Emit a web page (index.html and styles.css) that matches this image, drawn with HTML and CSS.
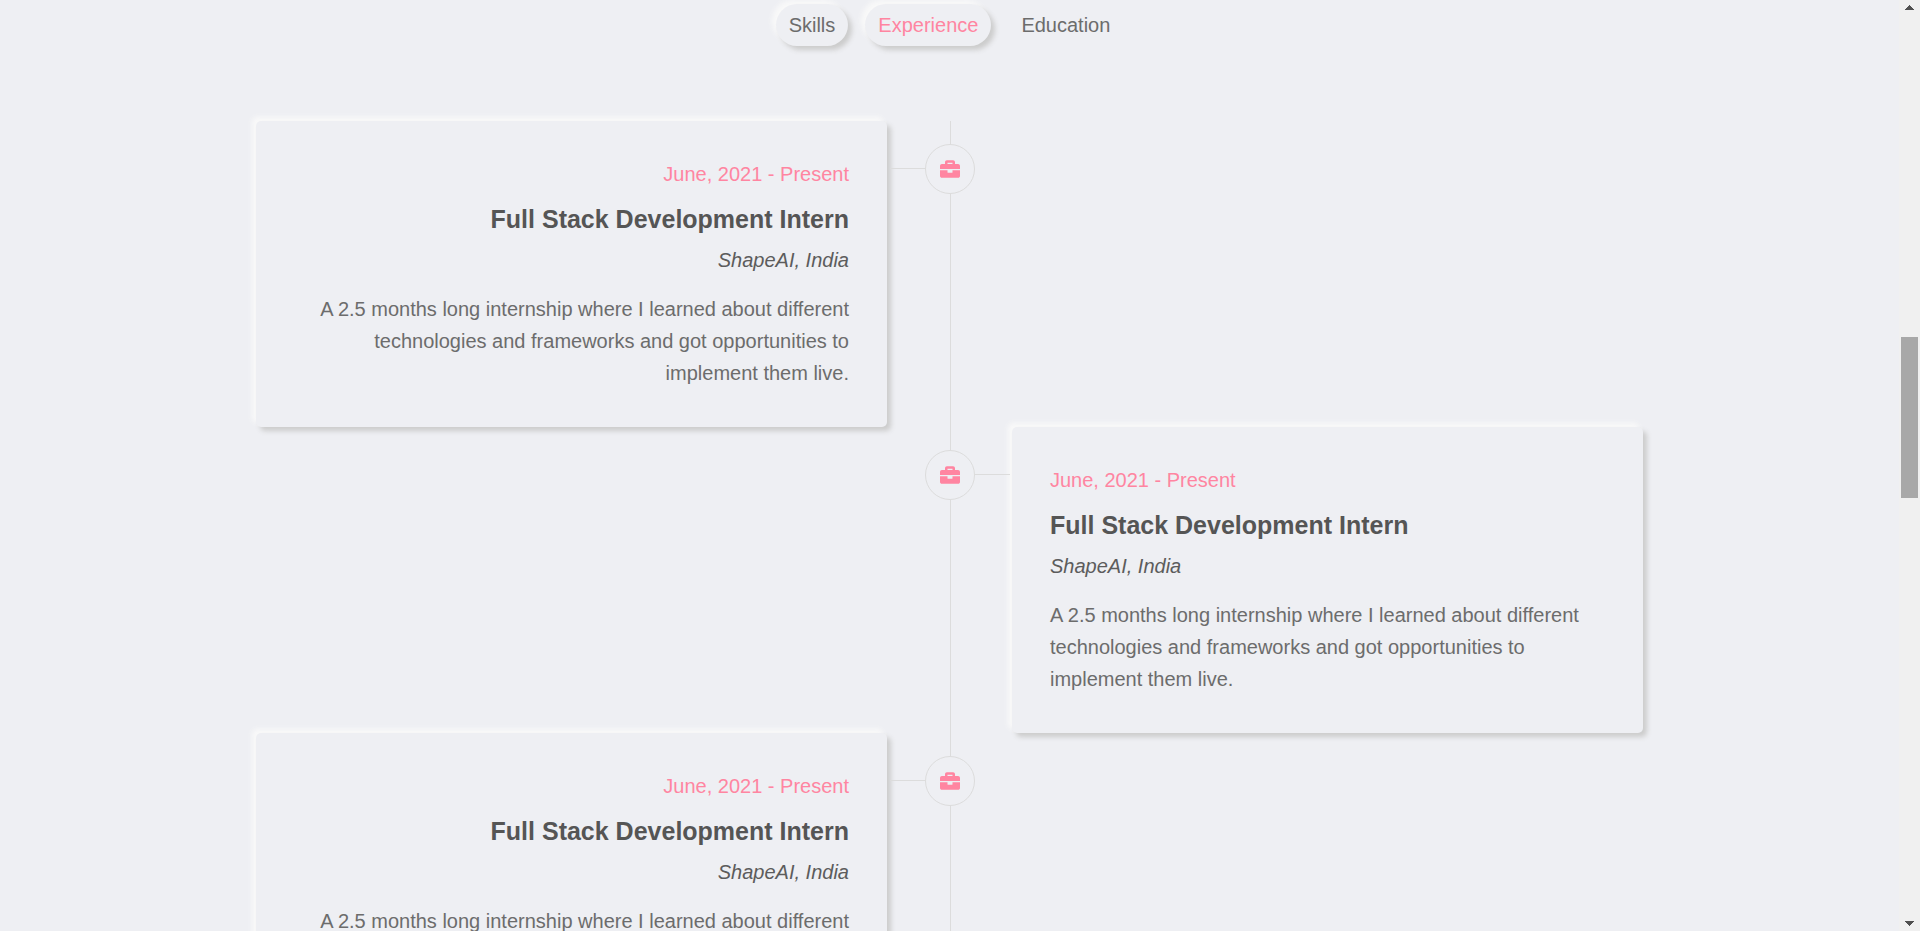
FILE: index.html
```html
<!DOCTYPE html>
<html lang="en">
<head>
<meta charset="utf-8">
<meta name="viewport" content="width=device-width, initial-scale=1">
<title>Experience</title>
<link rel="stylesheet" href="styles.css">
</head>
<body>
<svg class="sprite" aria-hidden="true">
  <symbol id="briefcase" viewBox="0 0 512 512">
    <path d="M320 336c0 8.840-7.160 16-16 16h-96c-8.840 0-16-7.160-16-16v-48H0v144c0 25.600 22.400 48 48 48h416c25.600 0 48-22.400 48-48V288H320v48zm144-208h-80V80c0-25.600-22.400-48-48-48H176c-25.600 0-48 22.400-48 48v48H48c-25.600 0-48 22.400-48 48v80h512v-80c0-25.600-22.400-48-48-48zm-144 0H192V96h128v32z"/>
  </symbol>
</svg>
<div class="viewport">
  <main class="page">
    <nav class="tabs" aria-label="Resume sections">
      <button class="tab tab-raised" type="button">Skills</button>
      <button class="tab tab-raised tab-active" type="button">Experience</button>
      <button class="tab" type="button">Education</button>
    </nav>
    <section class="timeline">
      <div class="item item-left">
        <article class="card">
          <p class="date">June, 2021 - Present</p>
          <h2 class="role">Full Stack Development Intern</h2>
          <p class="company">ShapeAI, India</p>
          <p class="summary">A 2.5 months long internship where I learned about different technologies and frameworks and got opportunities to implement them live.</p>
        </article>
        <div class="marker"><svg class="icon" aria-hidden="true"><use href="#briefcase"/></svg></div>
      </div>
      <div class="item item-right">
        <article class="card">
          <p class="date">June, 2021 - Present</p>
          <h2 class="role">Full Stack Development Intern</h2>
          <p class="company">ShapeAI, India</p>
          <p class="summary">A 2.5 months long internship where I learned about different technologies and frameworks and got opportunities to implement them live.</p>
        </article>
        <div class="marker"><svg class="icon" aria-hidden="true"><use href="#briefcase"/></svg></div>
      </div>
      <div class="item item-left">
        <article class="card">
          <p class="date">June, 2021 - Present</p>
          <h2 class="role">Full Stack Development Intern</h2>
          <p class="company">ShapeAI, India</p>
          <p class="summary">A 2.5 months long internship where I learned about different technologies and frameworks and got opportunities to implement them live.</p>
        </article>
        <div class="marker"><svg class="icon" aria-hidden="true"><use href="#briefcase"/></svg></div>
      </div>
    </section>
  </main>
  <div class="scrollbar" aria-hidden="true">
    <svg class="arrow" viewBox="0 0 9 5"><path d="M4 0h1v1h1v1h1v1h1v1h1v1H0V4h1V3h1V2h1V1h1z"/></svg>
    <div class="track"><div class="thumb"></div></div>
    <svg class="arrow arrow-down" viewBox="0 0 9 5"><path d="M4 0h1v1h1v1h1v1h1v1h1v1H0V4h1V3h1V2h1V1h1z"/></svg>
  </div>
</div>
</body>
</html>
```

FILE: styles.css
```css
* {
  box-sizing: border-box;
}

body {
  margin: 0;
  background: #eeeff3;
  color: #6c6c6c;
  font-family: "Liberation Sans", Arial, sans-serif;
  font-size: 20px;
  line-height: 32px;
}

.sprite {
  display: none;
}

.viewport {
  display: flex;
  height: 100vh;
  overflow: hidden;
}

.page {
  flex: 1;
  padding-top: 4px;
}

.tabs {
  display: flex;
  justify-content: center;
  gap: 17px;
  margin-bottom: 75px;
}

.tab {
  padding: 5px 13px;
  border: 0;
  border-radius: 21px;
  background: transparent;
  color: inherit;
  font: inherit;
}

.tab-raised {
  box-shadow: 4px 4px 5px #cccccc, -4px -4px 5px #f9f9f9;
}

.tab-active {
  color: #ff85a1;
}

.timeline {
  position: relative;
  max-width: 1387px;
  margin: 0 auto;
}

.timeline::before {
  content: "";
  position: absolute;
  top: 0;
  bottom: 0;
  left: 50%;
  width: 1px;
  background: #dcdcdc;
}

.item {
  display: grid;
  grid-template-columns: 1fr 125px 1fr;
}

.card {
  grid-row: 1;
  padding: 37px 38px 38px;
  border-radius: 5px;
  box-shadow: 4px 4px 5px #cccccc, -4px -4px 5px #f9f9f9;
}

.item-left .card {
  grid-column: 1;
  text-align: right;
}

.item-right .card {
  grid-column: 3;
}

.date,
.role,
.company,
.summary {
  margin: 0;
}

.date {
  color: #ff85a1;
}

.role {
  margin: 9px 0 5px;
  color: #555555;
  font-size: 25px;
  line-height: 40px;
}

.company {
  margin-bottom: 17px;
  color: #5c5c5c;
  font-style: italic;
}

.marker {
  position: relative;
  grid-row: 1;
  grid-column: 2;
  justify-self: center;
  display: grid;
  place-items: center;
  width: 50px;
  height: 50px;
  margin-top: 23px;
  border: 1px solid #dcdcdc;
  border-radius: 50%;
  background: #eeeff3;
}

.marker::before {
  content: "";
  position: absolute;
  top: 23px;
  width: 36px;
  height: 1px;
  background: #dcdcdc;
}

.item-left .marker::before {
  right: 100%;
}

.item-right .marker::before {
  left: 100%;
}

.icon {
  width: 20px;
  height: 20px;
  fill: #ff85a1;
}

.scrollbar {
  display: flex;
  flex-direction: column;
  align-items: center;
  width: 21px;
  padding: 5px 0;
  background: #f0f0f0;
}

.arrow {
  width: 9px;
  height: 5px;
  fill: #505050;
}

.arrow-down {
  transform: rotate(180deg);
}

.track {
  flex: 1;
  width: 17px;
  padding-top: 327px;
}

.thumb {
  height: 161px;
  background: #a8a8a8;
}
```
